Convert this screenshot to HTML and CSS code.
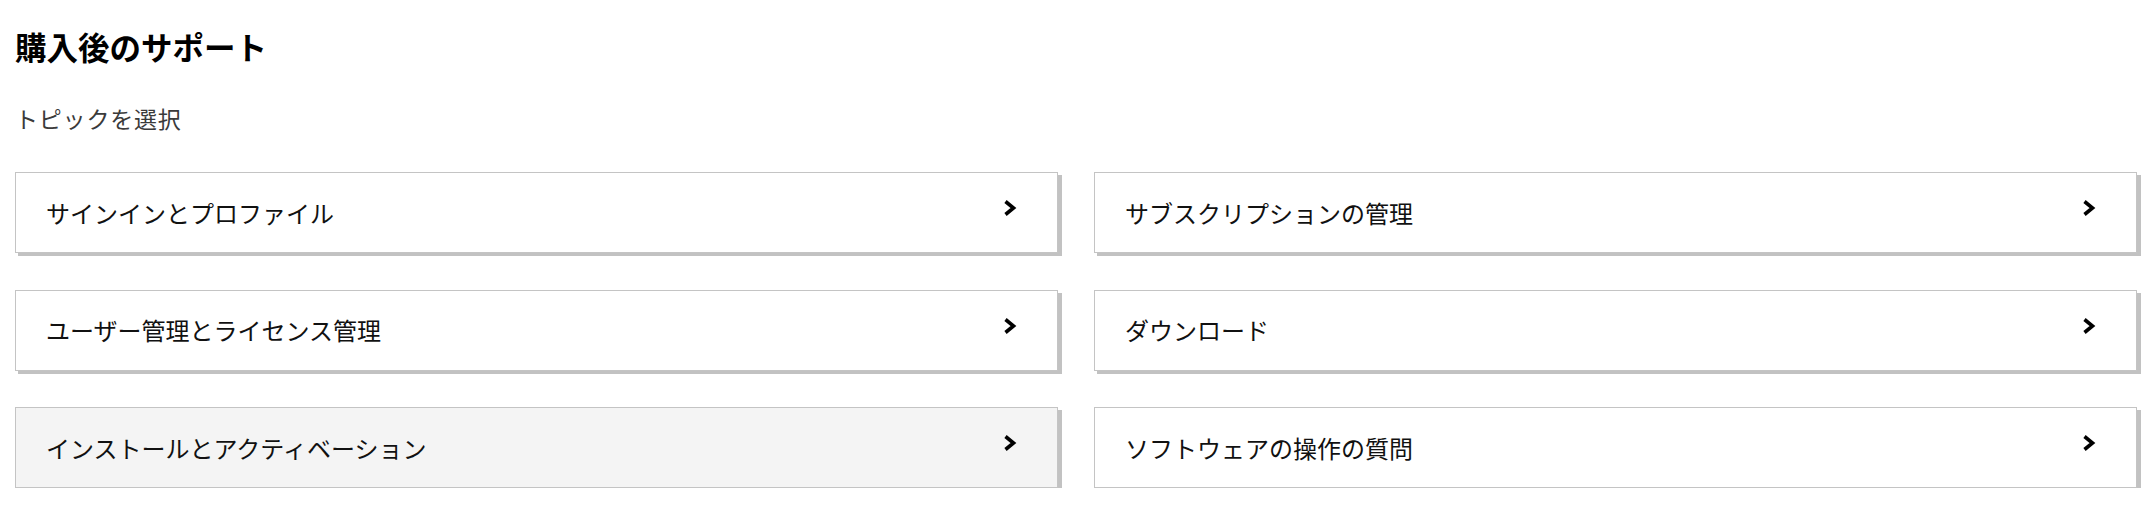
FILE: index.html
```html
<!DOCTYPE html>
<html lang="ja">
<head>
<meta charset="utf-8">
<title>購入後のサポート</title>
<link rel="stylesheet" href="styles.css">
</head>
<body>
<div class="page">
  <h1 class="title">購入後のサポート</h1>
  <p class="subtitle">トピックを選択</p>
  <div class="grid">
    <a class="card" href="#"><span class="label">サインインとプロファイル</span><svg class="chev" viewBox="0 0 14 18" width="14" height="18"><polyline points="2.5,2.5 10.5,9 2.5,15.5"/></svg></a>
    <a class="card" href="#"><span class="label">サブスクリプションの管理</span><svg class="chev" viewBox="0 0 14 18" width="14" height="18"><polyline points="2.5,2.5 10.5,9 2.5,15.5"/></svg></a>
    <a class="card" href="#"><span class="label">ユーザー管理とライセンス管理</span><svg class="chev" viewBox="0 0 14 18" width="14" height="18"><polyline points="2.5,2.5 10.5,9 2.5,15.5"/></svg></a>
    <a class="card" href="#"><span class="label">ダウンロード</span><svg class="chev" viewBox="0 0 14 18" width="14" height="18"><polyline points="2.5,2.5 10.5,9 2.5,15.5"/></svg></a>
    <a class="card card-hover" href="#"><span class="label">インストールとアクティベーション</span><svg class="chev" viewBox="0 0 14 18" width="14" height="18"><polyline points="2.5,2.5 10.5,9 2.5,15.5"/></svg></a>
    <a class="card" href="#"><span class="label">ソフトウェアの操作の質問</span><svg class="chev" viewBox="0 0 14 18" width="14" height="18"><polyline points="2.5,2.5 10.5,9 2.5,15.5"/></svg></a>
  </div>
</div>
</body>
</html>
```

FILE: styles.css
```css
html, body {
  margin: 0;
  padding: 0;
  background: #ffffff;
}

body {
  font-family: "Noto Sans CJK JP", "Noto Sans", sans-serif;
  color: #000000;
}

.page {
  padding: 24px 15px 0 15px;
}

.title {
  margin: 0;
  font-size: 31.5px;
  line-height: 44px;
  font-weight: 700;
  color: #000000;
}

.subtitle {
  margin: 35px 0 0 0;
  font-size: 23px;
  line-height: 30px;
  letter-spacing: 0.8px;
  color: #3a3a3a;
}

.grid {
  margin-top: 39px;
  display: grid;
  grid-template-columns: 1fr 1fr;
  column-gap: 36px;
  row-gap: 36.5px;
}

.card {
  box-sizing: border-box;
  height: 81px;
  display: flex;
  align-items: center;
  justify-content: space-between;
  padding: 0 40px 0 30px;
  border: 1px solid #c4c4c4;
  background: #ffffff;
  box-shadow: 3px 3px 0 #c2c2c2, 4px 3px 0 #c2c2c2;
  text-decoration: none;
  color: #000000;
}

.card-hover {
  background: #f4f4f4;
}

.label {
  font-size: 24px;
  line-height: 32px;
  color: #111111;
}

.chev {
  flex: none;
  margin-bottom: 9px;
  fill: none;
  stroke: #000000;
  stroke-width: 3.6;
  stroke-linecap: butt;
  stroke-linejoin: miter;
}
```
